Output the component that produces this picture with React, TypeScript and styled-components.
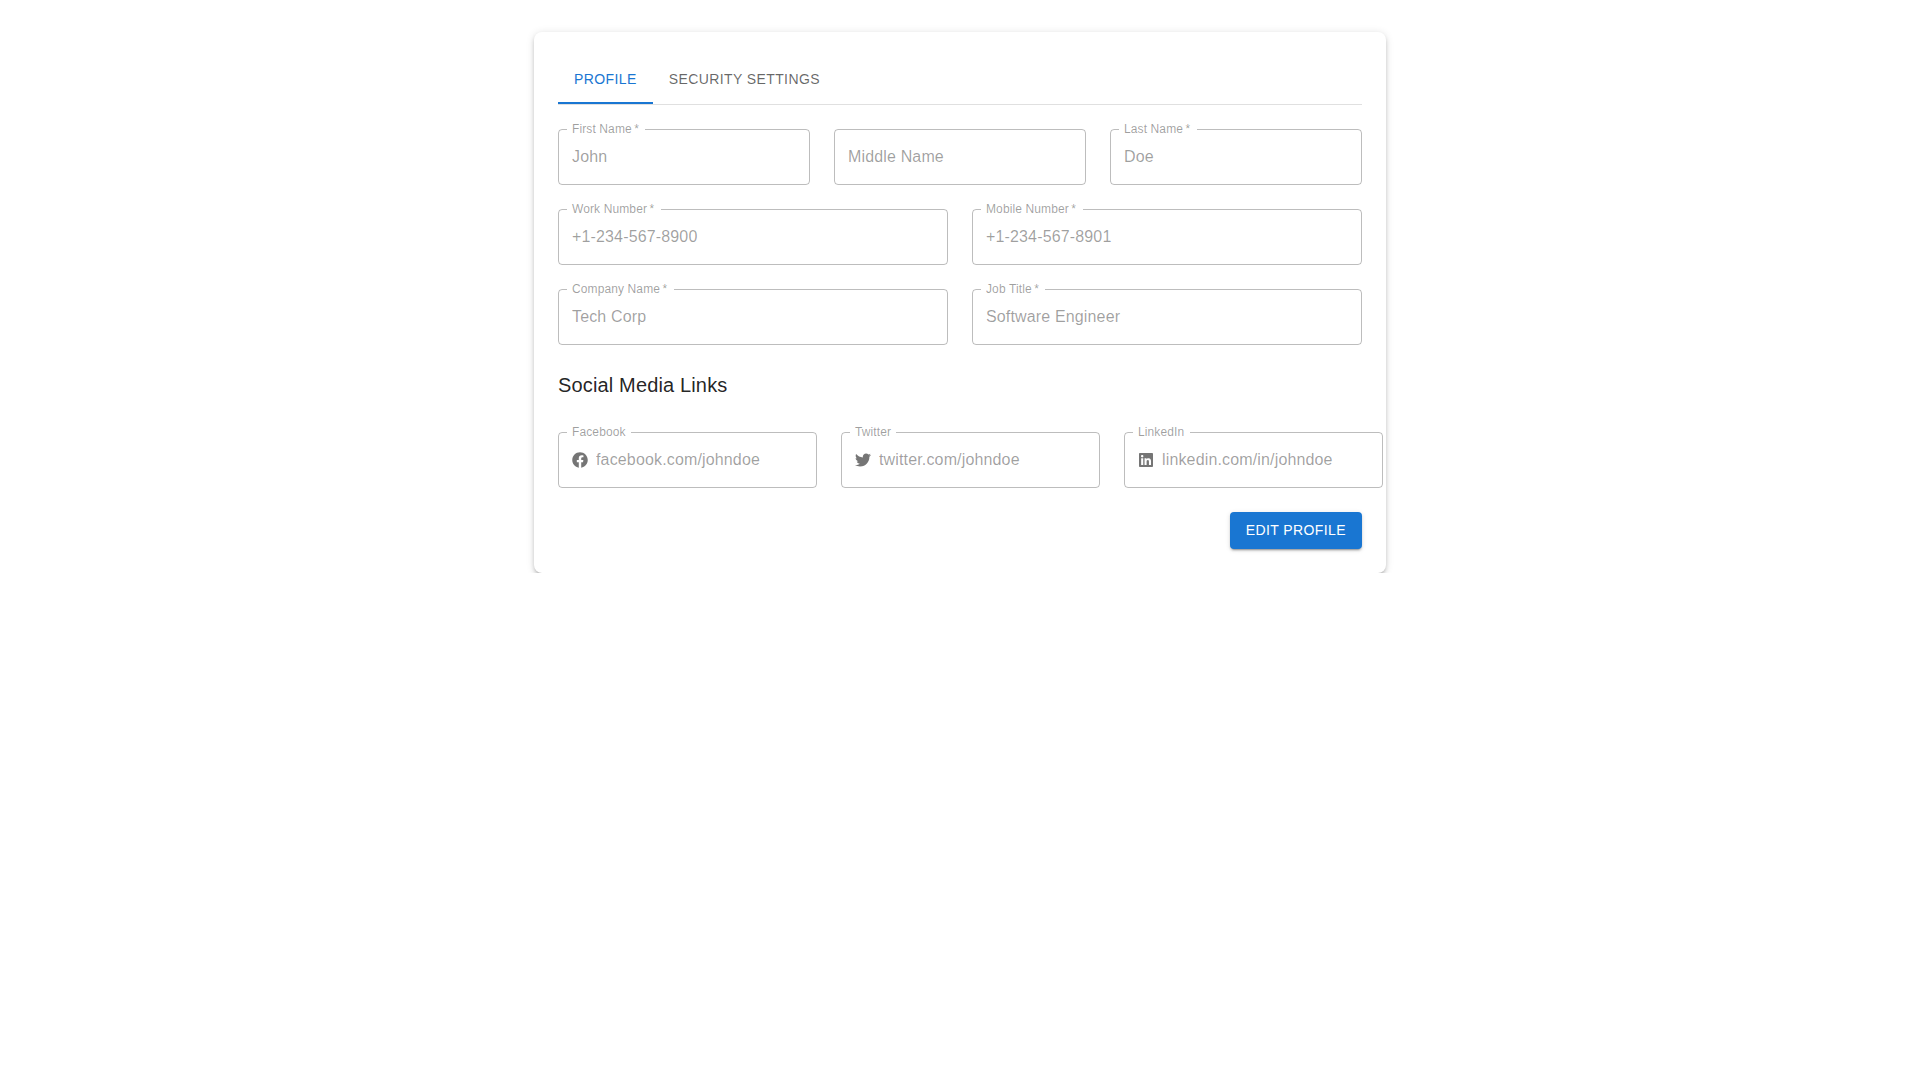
import React, { useState } from "react";
import styled, { createGlobalStyle } from "styled-components";
import { FaFacebook, FaLinkedin, FaTwitter } from "react-icons/fa";

interface FieldProps {
  label: string;
  value?: string;
  required?: boolean;
  icon?: React.ReactNode;
}

const GlobalStyle = createGlobalStyle`
  *, *::before, *::after {
    box-sizing: border-box;
  }

  body {
    margin: 0;
    background-color: #fff;
    color: rgba(0, 0, 0, 0.87);
    font-family: "Liberation Sans", Arial, sans-serif;
    font-size: 16px;
    line-height: 1.5;
    letter-spacing: 0.00938em;
    -webkit-font-smoothing: antialiased;
  }
`;

const Container = styled.main`
  max-width: 900px;
  margin: 0 auto;
  padding: 32px 24px 0;
`;

const Card = styled.div`
  padding: 24px;
  background-color: #fff;
  border-radius: 8px;
  box-shadow: 0 3px 3px -2px rgba(0, 0, 0, 0.2),
    0 3px 4px 0 rgba(0, 0, 0, 0.14), 0 1px 8px 0 rgba(0, 0, 0, 0.12);
`;

const TabBar = styled.div`
  display: flex;
  margin-bottom: 24px;
  border-bottom: 1px solid rgba(0, 0, 0, 0.12);
`;

interface TabProps {
  $active: boolean;
}

const Tab = styled.button<TabProps>`
  min-width: 90px;
  min-height: 48px;
  padding: 12px 16px;
  border: none;
  background: none;
  box-shadow: ${(props) => (props.$active ? "inset 0 -2px #1976d2" : "none")};
  color: ${(props) => (props.$active ? "#1976d2" : "rgba(0, 0, 0, 0.6)")};
  font-family: inherit;
  font-size: 14px;
  font-weight: 500;
  line-height: 1.25;
  letter-spacing: 0.02857em;
  text-transform: uppercase;
  cursor: pointer;
`;

const Form = styled.form`
  display: flex;
  flex-direction: column;
  gap: 24px;
`;

interface RowProps {
  $columns: number;
}

const Row = styled.div<RowProps>`
  display: grid;
  grid-template-columns: repeat(${(props) => props.$columns}, 1fr);
  gap: 24px;
`;

const SectionTitle = styled.h6`
  margin: 0 0 7px;
  font-size: 20px;
  font-weight: 500;
  line-height: 1.6;
  letter-spacing: 0.0075em;
`;

const FieldContainer = styled.div`
  position: relative;
  display: flex;
  align-items: center;
  height: 56px;
  padding: 0 14px;
`;

interface FieldLabelProps {
  $shrink: boolean;
}

const FieldLabel = styled.label<FieldLabelProps>`
  position: absolute;
  top: 0;
  left: 0;
  color: rgba(0, 0, 0, 0.38);
  line-height: 1.4375em;
  white-space: nowrap;
  pointer-events: none;
  transform-origin: top left;
  transform: ${(props) =>
    props.$shrink
      ? "translate(14px, -9px) scale(0.75)"
      : "translate(14px, 16px) scale(1)"};
`;

const FieldInput = styled.input`
  flex: 1;
  min-width: 0;
  height: 23px;
  padding: 0;
  border: 0;
  background: none;
  color: rgba(0, 0, 0, 0.38);
  font: inherit;
  letter-spacing: inherit;
`;

const Adornment = styled.span`
  display: flex;
  margin-right: 8px;
  color: rgba(0, 0, 0, 0.54);
`;

const Outline = styled.fieldset`
  position: absolute;
  inset: -5px 0 0;
  min-width: 0;
  margin: 0;
  padding: 0 8px;
  border: 1px solid rgba(0, 0, 0, 0.26);
  border-radius: 4px;
  overflow: hidden;
  pointer-events: none;
`;

// The hidden legend opens the gap in the border behind the label
const Notch = styled.legend<FieldLabelProps>`
  height: 11px;
  max-width: ${(props) => (props.$shrink ? "100%" : "0.01px")};
  padding: 0;
  font-size: 12px;
  white-space: nowrap;
  overflow: hidden;
  visibility: hidden;

  span {
    display: inline-block;
    padding: 0 5px;
  }
`;

const Actions = styled.div`
  display: flex;
  justify-content: flex-end;
`;

const EditButton = styled.button`
  padding: 6px 16px;
  border: none;
  border-radius: 4px;
  background-color: #1976d2;
  box-shadow: 0 3px 1px -2px rgba(0, 0, 0, 0.2),
    0 2px 2px 0 rgba(0, 0, 0, 0.14), 0 1px 5px 0 rgba(0, 0, 0, 0.12);
  color: white;
  font-family: inherit;
  font-size: 14px;
  font-weight: 500;
  line-height: 1.75;
  letter-spacing: 0.02857em;
  text-transform: uppercase;
  cursor: pointer;

  &:hover {
    background-color: #1565c0;
  }
`;

const Field: React.FC<FieldProps> = ({ label, value = "", required, icon }) => {
  const shrink = Boolean(value || icon);

  return (
    <FieldContainer>
      <FieldLabel $shrink={shrink}>
        {label}
        {required && <span>&thinsp;*</span>}
      </FieldLabel>
      {icon && <Adornment>{icon}</Adornment>}
      <FieldInput type="text" aria-label={label} value={value} disabled />
      <Outline aria-hidden="true">
        <Notch $shrink={shrink}>
          <span>
            {label}
            {required && <>&nbsp;*</>}
          </span>
        </Notch>
      </Outline>
    </FieldContainer>
  );
};

const tabs = ["Profile", "Security Settings"];

const App: React.FC = () => {
  const [activeTab, setActiveTab] = useState<number>(0);

  return (
    <>
      <GlobalStyle />
      <Container>
        <Card>
          <TabBar role="tablist">
            {tabs.map((tab, index) => (
              <Tab
                key={tab}
                role="tab"
                $active={activeTab === index}
                onClick={() => setActiveTab(index)}
              >
                {tab}
              </Tab>
            ))}
          </TabBar>

          {activeTab === 0 && (
            <Form>
              <Row $columns={3}>
                <Field label="First Name" value="John" required />
                <Field label="Middle Name" />
                <Field label="Last Name" value="Doe" required />
              </Row>
              <Row $columns={2}>
                <Field label="Work Number" value="+1-234-567-8900" required />
                <Field label="Mobile Number" value="+1-234-567-8901" required />
              </Row>
              <Row $columns={2}>
                <Field label="Company Name" value="Tech Corp" required />
                <Field label="Job Title" value="Software Engineer" required />
              </Row>
              <div>
                <SectionTitle>Social Media Links</SectionTitle>
              </div>
              <Row $columns={3}>
                <Field
                  label="Facebook"
                  value="facebook.com/johndoe"
                  icon={<FaFacebook />}
                />
                <Field
                  label="Twitter"
                  value="twitter.com/johndoe"
                  icon={<FaTwitter />}
                />
                <Field
                  label="LinkedIn"
                  value="linkedin.com/in/johndoe"
                  icon={<FaLinkedin />}
                />
              </Row>
              <Actions>
                <EditButton type="button">Edit Profile</EditButton>
              </Actions>
            </Form>
          )}
        </Card>
      </Container>
    </>
  );
};

export default App;
